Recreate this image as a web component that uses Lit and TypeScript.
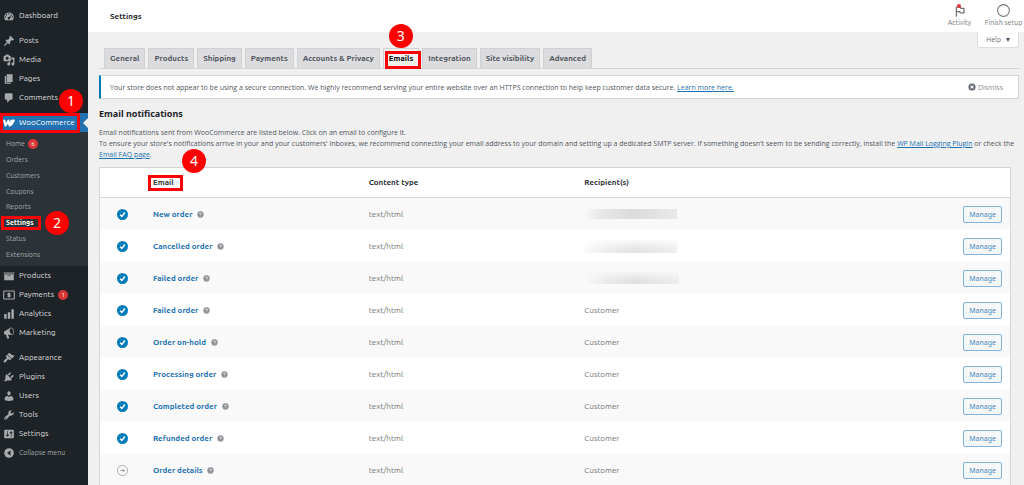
import { LitElement, html, svg, css, nothing } from "lit";
import { customElement } from "lit/decorators.js";
import { classMap } from "lit/directives/class-map.js";

const icons: Record<string, unknown> = {
  dashboard: svg`<path fill-rule="evenodd" d="M3.76 17h12.48A7.96 7.96 0 0 0 18 12c0-4.41-3.58-8-8-8s-8 3.59-8 8c0 1.91.67 3.67 1.76 5zM10 5.2a1.1 1.1 0 1 1 0 2.2 1.1 1.1 0 0 1 0-2.2zM5.8 6.8a1.1 1.1 0 1 1 0 2.2 1.1 1.1 0 0 1 0-2.2zM14.6 7l.6.5-3.4 5.4a2 2 0 1 1-1.4-1.2zM4.2 10.6a1.1 1.1 0 1 1 0 2.2 1.1 1.1 0 0 1 0-2.2zM15.8 10.6a1.1 1.1 0 1 1 0 2.2 1.1 1.1 0 0 1 0-2.2z"/>`,
  post: svg`<path d="M10.44 3.02l1.82-1.82 6.36 6.35-1.83 1.82c-1.05-.68-2.48-.57-3.41.36l-.75.75c-.92.93-1.04 2.35-.35 3.41l-1.83 1.82-2.41-2.41-2.8 2.79c-.42.42-3.38 2.71-3.8 2.29s1.86-3.39 2.28-3.81l2.79-2.79L4.1 9.36l1.83-1.82c1.05.69 2.48.57 3.4-.36l.75-.75c.93-.92 1.05-2.35.36-3.41z"/>`,
  media: svg`<path fill-rule="evenodd" d="M13 11V4c0-.55-.45-1-1-1h-1.67L9 1H5L3.67 3H2c-.55 0-1 .45-1 1v7c0 .55.45 1 1 1h10c.55 0 1-.45 1-1zM7 4.5c1.38 0 2.5 1.12 2.5 2.5S8.38 9.5 7 9.5 4.5 8.38 4.5 7 5.62 4.5 7 4.5zM14 6h5v10.5c0 1.38-1.12 2.5-2.5 2.5S14 17.88 14 16.5s1.12-2.5 2.5-2.5c.17 0 .34.02.5.05V9h-3V6zm-4 8.05V13h2v3.5c0 1.38-1.12 2.5-2.5 2.5S7 17.88 7 16.5 8.12 14 9.5 14c.17 0 .34.02.5.05z"/>`,
  page: svg`<path d="M6 15V2h10v13H6zm-1 1h8v2H3V5h2v11z"/>`,
  comments: svg`<path d="M5 2h9c1.1 0 2 .9 2 2v7c0 1.1-.9 2-2 2h-2l-5 5v-5H5c-1.1 0-2-.9-2-2V4c0-1.1.9-2 2-2z"/>`,
  woo: svg`<path d="M2 5.8 4.200 14.2 9 6.2 11 14.200C14 13 16 10 17.800 5.800M14.200 6.200l-1.600 7" fill="none" stroke="currentColor" stroke-width="3.600" stroke-linejoin="round" stroke-linecap="round"/>`,
  archive: svg`<path fill-rule="evenodd" d="M19 4v2H1V4h18zM2 7h16v10H2V7zm11 3V9H7v1h6z"/>`,
  money: svg`<rect x="1.2" y="3.2" width="17.6" height="13.6" rx="1" fill="none" stroke="currentColor" stroke-width="1.8"/><path d="M12.3 7.7H9.2a1.2 1.2 0 0 0 0 2.4h1.6a1.2 1.2 0 0 1 0 2.4H7.7M10 6v8" fill="none" stroke="currentColor" stroke-width="2"/>`,
  chart: svg`<path d="M18 18V2h-4v16h4zm-6 0V7H8v11h4zm-6 0v-8H2v8h4z"/>`,
  megaphone: svg`<path fill-rule="evenodd" d="M18.15 5.94c.46 1.62.38 3.22-.02 4.48-.42 1.28-1.26 2.18-2.3 2.48-.16.06-.26.06-.4.06-.06.02-.12.02-.18.02-.06.02-.14.02-.22.02h-6.8l2.22 5.5c.02.14-.06.26-.14.34-.08.1-.24.16-.34.16H6.95c-.1 0-.26-.06-.34-.16-.08-.08-.16-.2-.14-.34l-1-5.5H4.25l-.02-.02c-.5.06-1.08-.18-1.54-.62s-.88-1.08-1.06-1.88c-.24-.8-.2-1.56-.02-2.2.18-.62.58-1.08 1.06-1.3l.02-.02 9-5.4c.1-.06.18-.1.24-.16.06-.04.14-.08.24-.12.16-.08.28-.12.5-.18 1.04-.3 2.24.1 3.22.98s1.84 2.24 2.26 3.86zm-2.58 5.98h-.02c.4-.1.74-.34 1.04-.7.58-.7.86-1.76.86-3.04 0-.64-.1-1.3-.28-1.98-.34-1.36-1.02-2.5-1.78-3.24s-1.68-1.1-2.46-.88c-.82.22-1.4.96-1.7 2-.32 1.04-.28 2.36.06 3.72.38 1.36 1 2.5 1.8 3.24.78.74 1.62 1.1 2.48.88z"/>`,
  appearance: svg`<path d="M14.48 11.06L7.41 3.99l1.5-1.5c.5-.56 2.3-.47 3.51.32 1.21.8 1.43 1.28 2.91 2.1 1.18.64 2.45 1.26 4.45.85zm-.71.71L6.7 4.7 4.93 6.47c-.39.39-.39 1.02 0 1.41l1.06 1.06c.39.39.39 1.03 0 1.42-.6.6-1.43 1.11-2.21 1.69-.35.26-.7.53-1.01.84C1.43 14.23.4 16.08 1.4 17.07c.99 1 2.84-.03 4.18-1.36.31-.31.58-.66.85-1.02.57-.78 1.08-1.61 1.69-2.21.39-.39 1.02-.39 1.41 0l1.06 1.06c.39.39 1.02.39 1.41 0z"/>`,
  plugins: svg`<path d="M13.11 4.36L9.87 7.6 8 5.73l3.24-3.24c.35-.34 1.05-.2 1.56.32.52.51.66 1.21.31 1.55zm-8 1.77l.91-1.12 9.01 9.01-1.19.84c-.71.71-2.63 1.16-3.82 1.16H6.14L4.9 17.26c-.59.59-1.54.59-2.12 0-.59-.58-.59-1.53 0-2.12l1.24-1.24v-3.88c0-1.13.4-3.19 1.09-3.89zm7.26 3.97l3.24-3.24c.34-.35 1.04-.21 1.55.31.52.51.66 1.21.31 1.55l-3.24 3.25z"/>`,
  users: svg`<path d="M10 9.25c-2.27 0-2.73-3.44-2.73-3.44C7 4.02 7.82 2 9.97 2c2.16 0 2.98 2.02 2.71 3.81 0 0-.41 3.44-2.68 3.44zm0 2.57L12.72 10c2.39 0 4.52 2.33 4.52 4.53v2.49s-3.65 1.13-7.24 1.13c-3.65 0-7.24-1.13-7.24-1.13v-2.49c0-2.25 1.94-4.48 4.47-4.48z"/>`,
  tools: svg`<path fill-rule="evenodd" d="M16.68 9.77c-1.34 1.34-3.3 1.67-4.95.99l-5.41 6.52c-.99.99-2.59.99-3.58 0s-.99-2.59 0-3.57l6.52-5.42c-.68-1.65-.35-3.61.99-4.95 1.28-1.28 3.12-1.62 4.72-1.06l-2.89 2.89 2.82 2.82 2.86-2.87c.53 1.58.18 3.39-1.08 4.65zM3.81 16.21c.4.39 1.04.39 1.43 0 .4-.4.4-1.04 0-1.43-.39-.4-1.03-.4-1.43 0-.39.39-.39 1.03 0 1.43z"/>`,
  settings: svg`<path fill-rule="evenodd" d="M18 16V4c0-.55-.45-1-1-1H3c-.55 0-1 .45-1 1v12c0 .55.45 1 1 1h14c.55 0 1-.45 1-1zM8 11h1c.55 0 1 .45 1 1s-.45 1-1 1H8v1.5c0 .28-.22.5-.5.5s-.5-.22-.5-.5V13H6c-.55 0-1-.45-1-1s.45-1 1-1h1V5.5c0-.28.22-.5.5-.5s.5.22.5.5V11zm5-2h-1c-.55 0-1-.45-1-1s.45-1 1-1h1V5.5c0-.28.22-.5.5-.5s.5.22.5.5V7h1c.55 0 1 .45 1 1s-.45 1-1 1h-1v5.5c0 .28-.22.5-.5.5s-.5-.22-.5-.5V9z"/>`,
  collapse: svg`<path fill-rule="evenodd" d="M10 2a8 8 0 1 1 0 16 8 8 0 0 1 0-16zm2.5 3.5v9L7 10z"/>`,
  flag: svg`<path d="M4 19V3.5h6.5l1 2h5V13h-6l-1-2H4" fill="none" stroke="currentColor" stroke-width="2.2"/>`,
  ring: svg`<circle cx="10" cy="10" r="9" fill="none" stroke="currentColor" stroke-width="1.7"/>`,
  dismiss: svg`<path fill-rule="evenodd" d="M10 1a9 9 0 1 1 0 18 9 9 0 0 1 0-18zm0 7.2L7.2 5.4 5.4 7.2 8.2 10l-2.8 2.8 1.8 1.8 2.8-2.8 2.8 2.8 1.8-1.8-2.8-2.8 2.8-2.8-1.8-1.8z"/>`,
  check: svg`<circle cx="10" cy="10" r="10"/><path d="M5.7 10.4 8.8 13.6 14.4 6.4" fill="none" stroke="#fff" stroke-width="2.6"/>`,
  manual: svg`<circle cx="10" cy="10" r="9.2" fill="none" stroke="currentColor" stroke-width="1.4"/><path d="M6 10h7M10.4 7l3 3-3 3" fill="none" stroke="currentColor" stroke-width="1.7"/>`,
  help: svg`<circle cx="10" cy="10" r="9"/><path d="M7 8c0-3.6 6-3.6 6 0 0 2-2.8 2-2.8 4M10.2 13.5v2" fill="none" stroke="#fff" stroke-width="2"/>`,
};

const icon = (name: string, cls = "") =>
  html`<svg class="icon ${cls}" viewBox="0 0 20 20" aria-hidden="true">${icons[name]}</svg>`;

const step = (n: number) => html`<span class="frame frame-${n}"></span><span class="step step-${n}">${n}</span>`;

interface Item { label: string; icon: string; badge?: number; gap?: boolean }

const topMenu: Item[] = [
  { label: "Dashboard", icon: "dashboard" },
  { label: "Posts", icon: "post", gap: true },
  { label: "Media", icon: "media" },
  { label: "Pages", icon: "page" },
  { label: "Comments", icon: "comments" },
];
const submenu = ["Home", "Orders", "Customers", "Coupons", "Reports", "Settings", "Status", "Extensions"];
const bottomMenu: Item[] = [
  { label: "Products", icon: "archive" },
  { label: "Payments", icon: "money", badge: 1 },
  { label: "Analytics", icon: "chart" },
  { label: "Marketing", icon: "megaphone" },
  { label: "Appearance", icon: "appearance", gap: true },
  { label: "Plugins", icon: "plugins" },
  { label: "Users", icon: "users" },
  { label: "Tools", icon: "tools" },
  { label: "Settings", icon: "settings" },
];

@customElement("admin-menu")
export class AdminMenu extends LitElement {
  static styles = css`
    :host { display: block; background: #1d2327; padding-top: 6px; color: #dcdcde; font-size: 8px; }
    ul { list-style: none; margin: 0; padding: 0; }
    a, button { color: inherit; text-decoration: none; }
    .icon { width: 12px; height: 12px; fill: currentColor; color: #a7aaad; flex: none; }
    .item { position: relative; }
    .item > a, .collapse { display: flex; align-items: center; gap: 4px; height: 19px; padding-left: 3px; }
    .gap { margin-top: 6px; }
    .current > a { background: #2271b1; color: #fff; }
    .current > a .icon { color: #fff; }
    .arrow { position: absolute; right: 0; top: 5px; border: 5px solid transparent; border-right-color: #f0f0f1; border-left: 0; }
    .sub { display: flex; flex-direction: column; height: 134px; box-sizing: border-box; padding: 4px 0; background: #2c3338; color: #a7aaad; font-size: 7px; }
    .sub li { flex: 1; display: flex; align-items: center; position: relative; padding-left: 6px; gap: 3px; }
    .sub .on { color: #fff; font-weight: 700; }
    .badge { display: inline-flex; align-items: center; justify-content: center; width: 10px; height: 10px; border-radius: 5px; background: #d63638; color: #fff; font-size: 6px; }
    .collapse { width: 100%; border: 0; background: none; font: inherit; font-size: 7px; color: #a7aaad; }
    .frame { position: absolute; box-sizing: border-box; border: 3px solid #f00; z-index: 2; }
    .step { position: absolute; z-index: 3; width: 24px; height: 24px; border-radius: 12px; background: #f00; color: #fff; font-family: "Noto Sans", sans-serif; font-size: 14px; line-height: 24px; text-align: center; font-weight: 400; }
    .frame-1 { left: 0; top: 0; width: 80px; height: 20px; }
    .step-1 { left: 59px; top: -24px; }
    .frame-2 { left: 1px; top: 1px; width: 40px; height: 14px; }
    .step-2 { left: 45px; top: -4px; }
  `;
  item(i: Item) {
    return html`<li class=${classMap({ item: true, gap: !!i.gap })}>
      <a href="#">${icon(i.icon)}<span>${i.label}</span>${i.badge ? html`<span class="badge">${i.badge}</span>` : nothing}</a>
    </li>`;
  }
  render() {
    return html`<nav aria-label="Main menu"><ul>
      ${topMenu.map((i) => this.item(i))}
      <li class="item gap current">
        <a href="#">${icon("woo")}<span>WooCommerce</span></a><span class="arrow"></span>
        ${step(1)}
        <ul class="sub">
          ${submenu.map((s) => html`<li class=${s === "Settings" ? "on" : ""}>
            <a href="#">${s}</a>${s === "Home" ? html`<span class="badge">6</span>` : nothing}${s === "Settings" ? step(2) : nothing}
          </li>`)}
        </ul>
      </li>
      ${bottomMenu.map((i) => this.item(i))}
      <li><button class="collapse">${icon("collapse")}<span>Collapse menu</span></button></li>
    </ul></nav>`;
  }
}

const tabs = ["General", "Products", "Shipping", "Payments", "Accounts & Privacy", "Emails", "Integration", "Site visibility", "Advanced"];

const emails = [
  { name: "New order", hidden: "a" },
  { name: "Cancelled order", hidden: "b" },
  { name: "Failed order", hidden: "c" },
  { name: "Failed order" },
  { name: "Order on-hold" },
  { name: "Processing order" },
  { name: "Completed order" },
  { name: "Refunded order" },
  { name: "Order details", manual: true },
];

@customElement("app-root")
export class AppRoot extends LitElement {
  static styles = css`
    :host { display: grid; grid-template-columns: 88px minmax(0, 1fr); height: 100vh; overflow: hidden; background: #f0f0f1; color: #50575e; font-family: Ubuntu, "Noto Sans", sans-serif; font-size: 8px; line-height: 11px; }
    .icon { width: 12px; height: 12px; fill: currentColor; flex: none; }
    a { color: #2271b1; }
    .top { display: flex; align-items: center; justify-content: space-between; height: 32px; box-sizing: border-box; background: #fff; padding-left: 22px; }
    h1 { margin: 0; font-size: 8px; line-height: 11px; font-weight: 700; color: #1d2327; }
    .acts { display: flex; }
    .act { position: relative; display: flex; flex-direction: column; align-items: center; justify-content: flex-end; width: 47px; height: 32px; padding: 0 0 5px; border: 0; background: none; font: inherit; font-size: 7px; line-height: 10px; white-space: nowrap; color: #757575; }
    .act:last-child { width: 41px; }
    .act .ring { width: 13px; height: 13px; }
    .dot { position: absolute; left: 21px; top: 4px; width: 4px; height: 4px; border-radius: 2px; background: #e0343a; }
    .body { padding: 0 5px 0 11px; }
    .helpbar { display: flex; justify-content: flex-end; height: 16px; }
    .helpbtn { display: flex; align-items: center; gap: 5px; height: 16px; padding: 0 8px; border: 1px solid #dcdcde; border-top: 0; border-radius: 0 0 3px 3px; background: #fff; font: inherit; font-size: 7px; color: #646970; }
    .tri { border: 2px solid transparent; border-top: 4px solid #50575e; border-bottom: 0; }
    .tabs { display: flex; gap: 3px; height: 20px; padding-left: 5px; border-bottom: 1px solid #d5d5d8; }
    .tab { position: relative; display: flex; align-items: center; padding: 0 5px; height: 19px; border: 1px solid #d0d1d4; border-bottom: 0; background: #dcdcde; color: #50575e; font-weight: 700; text-decoration: none; white-space: nowrap; }
    .tab.on { background: #f0f0f1; color: #000; }
    .notice { display: flex; align-items: center; justify-content: space-between; margin-top: 6px; height: 24px; box-sizing: border-box; border: 1px solid #d5d5d8; border-left: 2px solid #007cba; background: #fff; padding: 0 15px 0 9px; color: #50575e; font-family: "Open Sans", "Noto Sans", sans-serif; font-size: 7px; }
    .dismiss { display: flex; align-items: center; gap: 2px; border: 0; padding: 0; background: none; font: inherit; font-size: 7px; color: #8c8f94; }
    .dismiss .icon { width: 8px; height: 8px; color: #646970; }
    h2 { margin: 8px 0 6px; font-family: "Noto Sans", sans-serif; font-size: 9px; line-height: 14px; color: #1d2327; }
    .desc { margin: 0; color: #50575e; font-family: "Open Sans", "Noto Sans", sans-serif; font-size: 7px; }
    .desc a { white-space: nowrap; }
    .wrap { position: relative; margin: 7px 8px 0 0; }
    table { width: 100%; table-layout: fixed; border-collapse: separate; border-spacing: 0; background: #fff; border: 1px solid #d5d5d8; }
    th, td { padding: 0 8px; text-align: left; height: 32px; }
    th { height: 29px; border-bottom: 1px solid #d5d5d8; color: #2c3338; }
    .c-status { width: 45px; }
    .c-email, .c-type { width: 23.7%; }
    .c-action { width: 60px; }
    td:first-child { padding-right: 9px; text-align: center; }
    td:last-child { text-align: right; }
    td { color: #757575; }
    tbody tr:nth-child(odd) { background: #f9f9f9; }
    td .icon { display: inline-block; vertical-align: middle; }
    td .check, td .manual { width: 11px; height: 11px; }
    .check { color: #007cba; }
    .manual { color: #999; }
    .name { font-weight: 700; text-decoration: none; }
    td .help { width: 7px; height: 7px; margin-left: 3px; color: #8c8f94; }
    .manage { height: 17px; padding: 0 5px; border: 1px solid #7fb2dc; border-radius: 2px; background: #f6f7f7; color: #4a8ac4; font-family: "Noto Sans", sans-serif; font-size: 7px; }
    .masked { display: block; width: 93px; height: 10px; background: linear-gradient(90deg, #f9f9f9, #e6e7e8 18%, #dadcdd 50%, #e2e3e4 80%, #e9e9ea); }
    .masked-b { height: 13px; background: linear-gradient(180deg, #fffc, #fff0 70%), linear-gradient(90deg, #fbfbfb, #eeeeef 25%, #e2e3e4 55%, #f0f0f0); }
    .masked-c { width: 95px; height: 12px; background: linear-gradient(180deg, #f9f9f9cc, #f9f9f900 70%), linear-gradient(90deg, #f9f9f9, #eaeaeb 25%, #dfe0e1 55%, #eeeeee); }
    .mark { position: relative; }
    .frame { position: absolute; box-sizing: border-box; border: 3px solid #f00; z-index: 2; }
    .step { position: absolute; z-index: 3; width: 24px; height: 24px; border-radius: 12px; background: #f00; color: #fff; font-family: "Noto Sans", sans-serif; font-size: 14px; line-height: 24px; text-align: center; font-weight: 400; }
    .frame-3 { left: 1px; top: 2px; width: 36px; height: 18px; }
    .step-3 { left: 5px; top: -25px; }
    .frame-4 { left: -5px; top: -2px; width: 35px; height: 16px; }
    .step-4 { left: 29px; top: -28px; }
  `;
  render() {
    return html`
      <admin-menu></admin-menu>
      <main>
        <header class="top">
          <h1>Settings</h1>
          <div class="acts">
            <button class="act">${icon("flag")}<span class="dot"></span><span>Activity</span></button>
            <button class="act">${icon("ring", "ring")}<span>Finish setup</span></button>
          </div>
        </header>
        <div class="body">
          <div class="helpbar"><button class="helpbtn">Help <span class="tri"></span></button></div>
          <nav class="tabs" aria-label="Settings sections">
            ${tabs.map((t) => html`<a href="#" class="tab ${t === "Emails" ? "on" : ""}">${t}${t === "Emails" ? step(3) : nothing}</a>`)}
          </nav>
          <div class="notice">
            <span>Your store does not appear to be using a secure connection. We highly recommend serving your entire website over an HTTPS connection to help keep customer data secure. <a href="#">Learn more here.</a></span>
            <button class="dismiss">${icon("dismiss")}Dismiss</button>
          </div>
          <h2>Email notifications</h2>
          <p class="desc">Email notifications sent from WooCommerce are listed below. Click on an email to configure it.<br />
            To ensure your store's notifications arrive in your and your customers' inboxes, we recommend connecting your email address to your domain and setting up a dedicated SMTP server. If something doesn't seem to be sending correctly, install the <a href="#">WP Mail Logging Plugin</a> or check the <a href="#">Email FAQ page</a>.</p>
          <div class="wrap">
            <table>
              <colgroup><col class="c-status" /><col class="c-email" /><col class="c-type" /><col /><col class="c-action" /></colgroup>
              <thead><tr><th></th><th><div class="mark">Email${step(4)}</div></th><th>Content type</th><th>Recipient(s)</th><th></th></tr></thead>
              <tbody>
                ${emails.map((e) => html`<tr>
                  <td>${e.manual ? icon("manual", "manual") : icon("check", "check")}</td>
                  <td><a href="#" class="name">${e.name}</a> ${icon("help", "help")}</td>
                  <td>text/html</td>
                  <td>${e.hidden ? html`<span class="masked masked-${e.hidden}"></span>` : "Customer"}</td>
                  <td><button class="manage">Manage</button></td>
                </tr>`)}
              </tbody>
            </table>
          </div>
        </div>
      </main>`;
  }
}
